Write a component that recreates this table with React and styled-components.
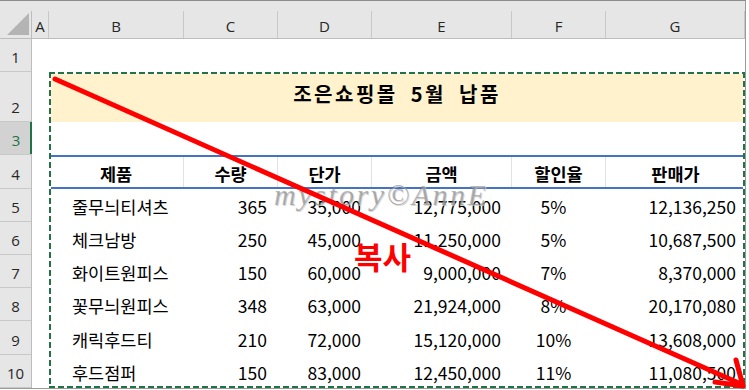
import React from 'react'
import styled, { createGlobalStyle } from 'styled-components'

const GlobalStyle = createGlobalStyle`
  body {
    margin: 0;
    background: #fff;
  }
`

const columns = ['A', 'B', 'C', 'D', 'E', 'F', 'G']
const rowHeights = [33.2, 50, 33.2, 33.2, 33.2, 33.2, 33.2, 33.2, 33.2, 33.2]

const heads = ['제품', '수량', '단가', '금액', '할인율', '판매가']
const aligns = ['left', 'right', 'right', 'right', 'center', 'right']

const items = [
  ['줄무늬티셔츠', '365', '35,000', '12,775,000', '5%', '12,136,250'],
  ['체크남방', '250', '45,000', '11,250,000', '5%', '10,687,500'],
  ['화이트원피스', '150', '60,000', '9,000,000', '7%', '8,370,000'],
  ['꽃무늬원피스', '348', '63,000', '21,924,000', '8%', '20,170,080'],
  ['캐릭후드티', '210', '72,000', '15,120,000', '10%', '13,608,000'],
  ['후드점퍼', '150', '83,000', '12,450,000', '11%', '11,080,500'],
]

function App() {
  return (<>
    <GlobalStyle />
    <Page>
      <Frame>
        <ColumnBar>
          <Corner>
            <svg width="22" height="22" viewBox="0 0 22 22">
              <polygon points="22,0 22,22 0,22" fill="#b4b4b4" />
            </svg>
          </Corner>
          {columns.map((c) => <ColLetter key={c}>{c}</ColLetter>)}
        </ColumnBar>

        <Body>
          <RowHeaders>
            {rowHeights.map((h, i) => (
              <RowNum key={i} $h={h} $active={i === 2}>{i + 1}</RowNum>
            ))}
          </RowHeaders>

          <Sheet>
            <EmptyRow />
            <Range>
              <TitleRow>조은쇼핑몰 5월 납품</TitleRow>
              <EmptyRow />
              <HeadRow>
                {heads.map((h) => <HeadCell key={h}>{h}</HeadCell>)}
              </HeadRow>
              {items.map((row, r) => (
                <DataRow key={r}>
                  {row.map((v, i) => (
                    <Cell key={i} $align={aligns[i]} $last={i === 5}>{v}</Cell>
                  ))}
                </DataRow>
              ))}
              <Marquee />
            </Range>
          </Sheet>
        </Body>
      </Frame>

      {/* 블로그 워터마크 + 화살표 */}
      <Watermark>mystory©AnnE</Watermark>
      <Arrow width="749" height="390" viewBox="0 0 749 390">
        <line x1="55" y1="79" x2="741" y2="384" stroke="#ff0000" strokeWidth="5" strokeLinecap="round" />
        <polyline points="736,360 743,386 715,382" fill="none" stroke="#ff0000" strokeWidth="5" strokeLinecap="round" strokeLinejoin="round" />
      </Arrow>
      <CopyLabel>복사</CopyLabel>
    </Page>
  </>
  )
}

export default App


const Page = styled.div`
  position: relative;
  width: 749px;
  height: 390px;
  overflow: hidden;
  background: #fff;
`

const Frame = styled.div`
  width: 745px;
  border-top: 1px solid #8c8c8c;
  border-right: 1px solid #9a9a9a;
  border-bottom: 1px solid #9a9a9a;
`

const ColumnBar = styled.div`
  display: grid;
  grid-template-columns: 32px 17px 135px 94px 94px 140px 94px 139px;
  height: 27px;
  padding-top: 10px;
  background: #e6e6e6;
  border-bottom: 1px solid #bdbdbd;
`

const Corner = styled.div`
  display: flex;
  justify-content: flex-end;
  align-items: flex-end;
  padding: 0 2px 3px 0;
  border-right: 1px solid #bdbdbd;
`

const ColLetter = styled.div`
  display: flex;
  justify-content: center;
  align-items: center;
  border-right: 1px solid #c8c8c8;
  font-family: "Open Sans", "Noto Sans", sans-serif;
  font-size: 15px;
  color: #262626;
  padding-top: 2px;
`

const Body = styled.div`
  display: flex;
`

const RowHeaders = styled.div`
  width: 32px;
  flex-shrink: 0;
  background: #e6e6e6;
  border-right: 1px solid #bdbdbd;
  box-sizing: border-box;
`

const RowNum = styled.div`
  height: ${(p) => p.$h}px;
  box-sizing: border-box;
  display: flex;
  justify-content: center;
  align-items: flex-end;
  padding-bottom: 4px;
  border-bottom: 1px solid #c8c8c8;
  font-family: "Open Sans", "Noto Sans", sans-serif;
  font-size: 15px;
  color: ${(p) => (p.$active ? '#217346' : '#262626')};
  background: ${(p) => (p.$active ? '#d2d2d2' : 'transparent')};
  box-shadow: ${(p) => (p.$active ? 'inset -2px 0 0 #217346' : 'none')};
  margin-right: ${(p) => (p.$active ? '-1px' : '0')};
`

const Sheet = styled.div`
  flex: 1;
  display: flex;
  flex-direction: column;
`

const EmptyRow = styled.div`
  height: 33.2px;
`

const Range = styled.div`
  position: relative;
  margin-left: 17px;
  width: 696px;
  font-family: "Noto Sans CJK KR", "Noto Sans", sans-serif;
  color: #000;
`

const TitleRow = styled.div`
  height: 50px;
  display: flex;
  justify-content: center;
  align-items: center;
  padding-bottom: 8px;
  box-sizing: border-box;
  background: #fff2cc;
  font-size: 20px;
  font-weight: 700;
  letter-spacing: 2.5px;
  word-spacing: 6px;
`

const HeadRow = styled.div`
  display: grid;
  grid-template-columns: 135px 94px 94px 140px 94px 139px;
  height: 33.2px;
  box-sizing: border-box;
  border-top: 2px solid #4472c4;
  border-bottom: 2px solid #4472c4;
`

const HeadCell = styled.div`
  display: flex;
  justify-content: center;
  align-items: flex-end;
  padding-bottom: 1px;
  font-size: 17.5px;
  font-weight: 700;
  border-right: 1px solid #e2e2e2;
  &:last-child {
    border-right: none;
  }
`

const DataRow = styled.div`
  display: grid;
  grid-template-columns: 135px 94px 94px 140px 94px 139px;
  height: 33.2px;
`

const Cell = styled.div`
  display: flex;
  align-items: flex-end;
  justify-content: ${(p) => (p.$align === 'left' ? 'flex-start' : p.$align === 'center' ? 'center' : 'flex-end')};
  padding: 0 ${(p) => (p.$last ? '9px' : '11px')} 3px ${(p) => (p.$align === 'left' ? '23px' : '0')};
  font-size: 17.5px;
`

const Marquee = styled.div`
  position: absolute;
  inset: 0;
  pointer-events: none;
  background:
    repeating-linear-gradient(90deg, #217346 0 6px, #fff 6px 9px) top left / 100% 2px no-repeat,
    repeating-linear-gradient(90deg, #217346 0 6px, #fff 6px 9px) bottom left / 100% 2px no-repeat,
    repeating-linear-gradient(180deg, #217346 0 6px, #fff 6px 9px) top left / 2px 100% no-repeat,
    repeating-linear-gradient(180deg, #217346 0 6px, #fff 6px 9px) top right / 2px 100% no-repeat;
`

const Watermark = styled.div`
  position: absolute;
  left: 274px;
  top: 180px;
  line-height: 1;
  font-family: "Liberation Serif", serif;
  font-style: italic;
  font-size: 30px;
  letter-spacing: 2.5px;
  color: rgba(120, 120, 120, 0.55);
  text-shadow: 1px 1px 0 rgba(200, 200, 200, 0.7);
  pointer-events: none;
`

const Arrow = styled.svg`
  position: absolute;
  left: 0;
  top: 0;
  pointer-events: none;
`

const CopyLabel = styled.div`
  position: absolute;
  left: 354px;
  top: 240px;
  line-height: 1;
  font-family: "Noto Sans CJK KR", sans-serif;
  font-size: 31px;
  font-weight: 700;
  color: #ff0000;
`
